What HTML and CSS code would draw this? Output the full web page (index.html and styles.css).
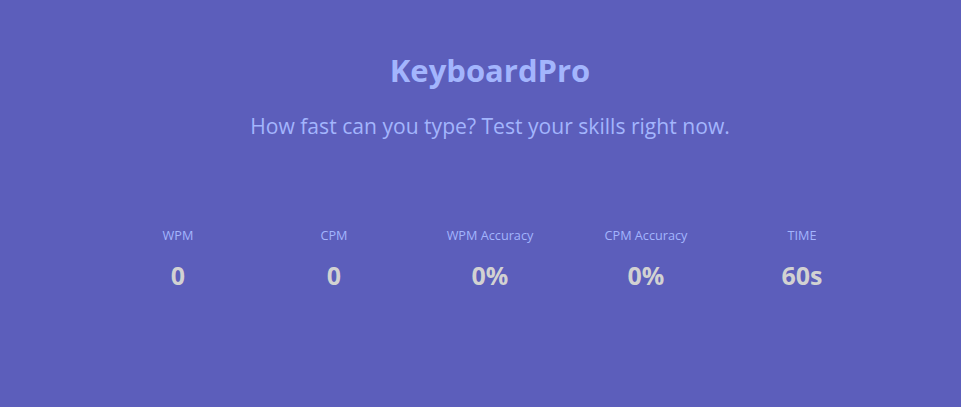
FILE: index.html
```html
<!DOCTYPE html>
<html lang="en">
<head>
<meta charset="utf-8">
<title>KeyboardPro</title>
<link rel="stylesheet" href="styles.css">
</head>
<body>
<main class="page">
  <header class="hero">
    <h1 class="title">KeyboardPro</h1>
    <p class="subtitle">How fast can you type? Test your skills right now.</p>
  </header>
  <section class="stats">
    <div class="stat"><span class="label">WPM</span><span class="value">0</span></div>
    <div class="stat"><span class="label">CPM</span><span class="value">0</span></div>
    <div class="stat"><span class="label">WPM Accuracy</span><span class="value">0%</span></div>
    <div class="stat"><span class="label">CPM Accuracy</span><span class="value">0%</span></div>
    <div class="stat"><span class="label">TIME</span><span class="value">60s</span></div>
  </section>
</main>
</body>
</html>
```

FILE: styles.css
```css
html, body {
  margin: 0;
  padding: 0;
  background: #5c5ebb;
  height: 100%;
}
body {
  font-family: "Open Sans", "Noto Sans", sans-serif;
  overflow: hidden;
}
.page {
  padding-left: 19px;
  display: flex;
  flex-direction: column;
  align-items: center;
}
.hero {
  display: flex;
  flex-direction: column;
  align-items: center;
  padding-top: 51px;
}
.title {
  margin: 0;
  font-size: 31px;
  font-weight: 700;
  line-height: 38px;
  color: #a3b5fd;
}
.subtitle {
  margin: 25px 0 0;
  font-size: 21.1px;
  line-height: 24px;
  color: #a3b5fd;
}
.stats {
  display: flex;
  margin-top: 89px;
}
.stat {
  width: 156px;
  display: flex;
  flex-direction: column;
  align-items: center;
}
.label {
  font-size: 12.7px;
  line-height: 16px;
  color: #a3b5fd;
}
.value {
  margin-top: 17px;
  font-size: 25px;
  font-weight: 700;
  line-height: 30px;
  color: #d2d2d2;
}
```
